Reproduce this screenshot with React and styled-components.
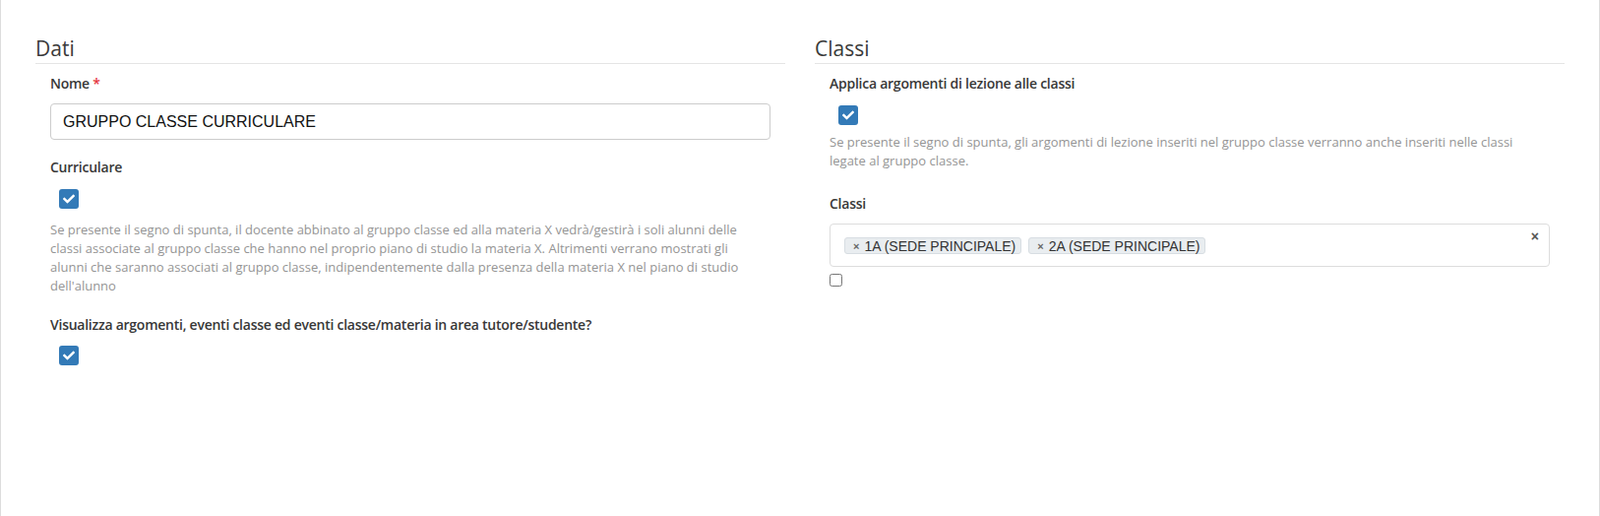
import styled, { createGlobalStyle } from "styled-components";

const GlobalStyle = createGlobalStyle`
  html, body {
    margin: 0;
    padding: 0;
    background: #fff;
  }
  body {
    font-family: "Open Sans", "Liberation Sans", Arial, sans-serif;
    color: #333;
  }
  * {
    box-sizing: border-box;
  }
`;

const Panel = styled.div`
  min-height: 524px;
  border-left: 1px solid #ddd;
  border-right: 1px solid #ddd;
  padding: 34px 35px 0;
`;

const Row = styled.div`
  display: grid;
  grid-template-columns: 1fr 1fr;
  column-gap: 30px;
`;

const Fieldset = styled.fieldset`
  margin: 0;
  padding: 0;
  border: none;
  min-width: 0;
`;

const Legend = styled.legend`
  display: block;
  width: 100%;
  padding: 0;
  margin: 0 0 10px;
  font-size: 21px;
  line-height: 30px;
  color: #3a3a3a;
  border-bottom: 1px solid #e5e5e5;
`;

const Body = styled.div`
  padding: 0 15px;
`;

const Group = styled.div`
  margin-bottom: ${(p) => p.$gap ?? 18}px;
`;

const Label = styled.label`
  display: block;
  font-size: 14px;
  line-height: 20px;
  font-weight: 600;
  letter-spacing: -0.25px;
  color: #383838;
  margin-bottom: ${(p) => p.$gap ?? 10}px;
`;

const Required = styled.span`
  color: #e5343d;
`;

const TextInput = styled.input`
  display: block;
  width: 100%;
  height: 37px;
  padding: 0 12px;
  border: 1px solid #ccc;
  border-radius: 4px;
  font-family: "Liberation Sans", Arial, sans-serif;
  font-size: 16px;
  color: #111;
  background: #fff;
  outline: none;
`;

const Check = styled.span`
  display: flex;
  align-items: center;
  justify-content: center;
  width: 20px;
  height: 20px;
  margin-left: 9px;
  border-radius: 3px;
  background: #337ab7;

  svg {
    width: 12px;
    height: 12px;
    fill: #fff;
  }
`;

const Help = styled.p`
  max-width: 722px;
  margin: ${(p) => p.$top ?? 12}px 0 0;
  font-size: 13px;
  line-height: 19px;
  color: #959595;
`;

const Select = styled.div`
  position: relative;
  display: flex;
  flex-wrap: wrap;
  gap: 7px;
  min-height: 44px;
  padding: 13px 40px 0 14px;
  border: 1px solid #ddd;
  border-radius: 4px;
  background: #fff;
`;

const Tag = styled.span`
  display: inline-flex;
  align-items: center;
  gap: 5px;
  height: 17px;
  padding: 0 5px 0 8px;
  border: 1px solid #d7dde2;
  border-radius: 3px;
  background: #e9edf0;
  font-family: "Liberation Sans", Arial, sans-serif;
  font-size: 14px;
  color: #333;
`;

const TagRemove = styled.span`
  font-size: 11px;
  font-weight: 700;
  color: #666;
`;

const Clear = styled.span`
  position: absolute;
  top: 4px;
  right: 10px;
  font-family: "Liberation Sans", Arial, sans-serif;
  font-size: 14px;
  font-weight: 700;
  color: #555;
`;

const Native = styled.input`
  display: block;
  width: 13px;
  height: 13px;
  margin: 7px 0 0;
`;

const CheckIcon = () => (
  <svg viewBox="0 0 512 512" aria-hidden="true">
    <path d="M173.9 439.4 7.5 273c-10-10-10-26.2 0-36.2l36.2-36.2c10-10 26.2-10 36.2 0L192 312.7 432.1 72.6c10-10 26.2-10 36.2 0l36.2 36.2c10 10 10 26.2 0 36.2L210.1 439.4c-10 10-26.2 10-36.2 0z" />
  </svg>
);

const CheckBox = () => (
  <Check>
    <CheckIcon />
  </Check>
);

export default function App() {
  return (
    <>
      <GlobalStyle />
      <Panel>
        <Row>
          <Fieldset>
            <Legend>Dati</Legend>
            <Body>
              <Group>
                <Label>
                  Nome <Required>*</Required>
                </Label>
                <TextInput defaultValue="GRUPPO CLASSE CURRICULARE" readOnly />
              </Group>
              <Group $gap={20}>
                <Label $gap={12}>Curriculare</Label>
                <CheckBox />
                <Help>
                  Se presente il segno di spunta, il docente abbinato al gruppo classe ed alla materia X
                  vedrà/gestirà i soli alunni delle classi associate al gruppo classe che hanno nel
                  proprio piano di studio la materia X. Altrimenti verrano mostrati gli alunni che
                  saranno associati al gruppo classe, indipendentemente dalla presenza della materia X
                  nel piano di studio dell'alunno
                </Help>
              </Group>
              <Group>
                <Label $gap={11}>
                  Visualizza argomenti, eventi classe ed eventi classe/materia in area tutore/studente?
                </Label>
                <CheckBox />
              </Group>
            </Body>
          </Fieldset>
          <Fieldset>
            <Legend>Classi</Legend>
            <Body>
              <Group $gap={24}>
                <Label $gap={12}>Applica argomenti di lezione alle classi</Label>
                <CheckBox />
                <Help $top={8}>
                  Se presente il segno di spunta, gli argomenti di lezione inseriti nel gruppo classe
                  verranno anche inseriti nelle classi legate al gruppo classe.
                </Help>
              </Group>
              <Group>
                <Label>Classi</Label>
                <Select>
                  <Tag>
                    <TagRemove>×</TagRemove>1A (SEDE PRINCIPALE)
                  </Tag>
                  <Tag>
                    <TagRemove>×</TagRemove>2A (SEDE PRINCIPALE)
                  </Tag>
                  <Clear>×</Clear>
                </Select>
                <Native type="checkbox" readOnly />
              </Group>
            </Body>
          </Fieldset>
        </Row>
      </Panel>
    </>
  );
}
